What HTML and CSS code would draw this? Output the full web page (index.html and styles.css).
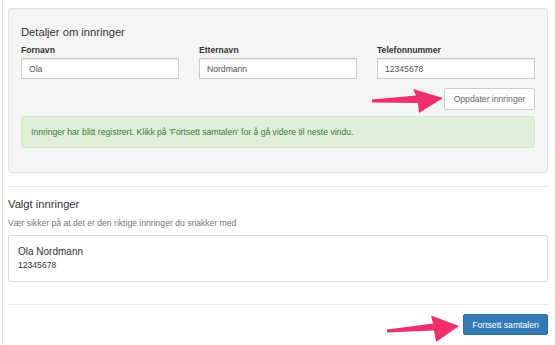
FILE: index.html
```html
<!DOCTYPE html>
<html lang="no">
<head>
<meta charset="utf-8">
<title>Innringer</title>
<link rel="stylesheet" href="styles.css">
</head>
<body>
<div class="page">
  <div class="well">
    <h3 class="well-title">Detaljer om innringer</h3>
    <div class="fields">
      <div class="field">
        <label class="label">Fornavn</label>
        <div class="input">Ola</div>
      </div>
      <div class="field">
        <label class="label">Etternavn</label>
        <div class="input">Nordmann</div>
      </div>
      <div class="field">
        <label class="label">Telefonnummer</label>
        <div class="input">12345678</div>
      </div>
    </div>
    <div class="actions">
      <button class="btn btn-default">Oppdater innringer</button>
    </div>
    <div class="alert">Innringer har blitt registrert. Klikk på 'Fortsett samtalen' for å gå videre til neste vindu.</div>
  </div>
  <hr class="rule rule-first">
  <h3 class="section-title">Valgt innringer</h3>
  <p class="help">Vær sikker på at det er den riktige innringer du snakker med</p>
  <div class="caller">
    <div class="caller-name">Ola Nordmann</div>
    <div class="caller-phone">12345678</div>
  </div>
  <hr class="rule rule-second">
  <div class="footer">
    <button class="btn btn-primary">Fortsett samtalen</button>
  </div>
  <svg class="arrows" width="555" height="345" viewBox="0 0 555 345">
    <polygon fill="#ee2f6b" points="372,99.5 416,95.5 413,89 443,98 419,113 418,103 372,102.5"/>
    <polygon fill="#ee2f6b" points="387,329.5 433,323.5 431,315.5 459,326 436,342 434,330.5 387,332.5"/>
  </svg>
</div>
</body>
</html>
```
FILE: styles.css
```css
html, body {
  margin: 0;
  padding: 0;
  background: #fff;
}
body {
  font-family: "Liberation Sans", Arial, Helvetica, sans-serif;
  color: #333;
  font-size: 8.6px;
}
.page {
  position: relative;
  margin-left: 2px;
  border-left: 1px solid #dcdcdc;
  padding: 8px 7px 0 5px;
  height: 345px;
  box-sizing: border-box;
  overflow: hidden;
}
.well {
  background: #f5f5f5;
  border: 1px solid #e3e3e3;
  border-radius: 3px;
  padding: 0 12px 24px 12px;
  box-shadow: inset 0 1px 1px rgba(0,0,0,.03);
}
.well-title {
  margin: 0;
  font-weight: normal;
  font-size: 11.2px;
  line-height: 22px;
  padding-top: 12px;
  height: 22px;
  box-sizing: content-box;
  display: flex;
  align-items: center;
}
.fields {
  display: grid;
  grid-template-columns: repeat(3, 1fr);
  column-gap: 20px;
  margin-top: 1px;
}
.label {
  display: block;
  font-weight: bold;
  font-size: 8.6px;
  line-height: 12px;
  margin-bottom: 2px;
}
.input {
  height: 21px;
  box-sizing: border-box;
  border: 1px solid #ccc;
  background: #fff;
  box-shadow: inset 0 1px 1px rgba(0,0,0,.075);
  padding: 0 7px;
  display: flex;
  align-items: center;
  color: #555;
  font-size: 8.6px;
}
.actions {
  display: flex;
  justify-content: flex-end;
  margin-top: 9px;
}
.btn {
  font-family: inherit;
  font-size: 8.6px;
  height: 22px;
  border-radius: 2px;
  padding: 0 9px;
  border: 1px solid #ccc;
  cursor: pointer;
}
.btn-default {
  background: #fff;
  color: #666;
  width: 91px;
  padding: 0;
}
.btn-primary {
  background: #337ab7;
  border-color: #2e6da4;
  color: #fff;
  width: 85px;
  height: 21px;
  padding: 0;
}
.alert {
  margin-top: 6px;
  height: 32px;
  box-sizing: border-box;
  background: #dff0d8;
  border: 1px solid #d6e9c6;
  border-radius: 3px;
  color: #3c763d;
  padding: 0 9px;
  display: flex;
  align-items: center;
  font-size: 8.6px;
}
.rule {
  border: 0;
  border-top: 1px solid #eaeaea;
  margin: 0;
}
.rule-first {
  margin-top: 13px;
}
.section-title {
  margin: 8px 0 0 0;
  font-weight: normal;
  font-size: 11.2px;
  line-height: 18px;
}
.help {
  margin: 4px 0 0 0;
  color: #777;
  font-size: 8.6px;
  line-height: 12px;
}
.caller {
  margin-top: 6px;
  border: 1px solid #ddd;
  background: #fff;
  border-radius: 2px;
  padding: 9px 9px 10px 9px;
  height: 47px;
  box-sizing: border-box;
}
.caller-name {
  font-size: 10px;
  line-height: 14px;
}
.caller-phone {
  font-size: 8.6px;
  line-height: 12px;
}
.rule-second {
  margin-top: 22px;
}
.footer {
  display: flex;
  justify-content: flex-end;
  margin-top: 9px;
}
.arrows {
  position: absolute;
  left: -3px;
  top: 0;
  pointer-events: none;
}
```
